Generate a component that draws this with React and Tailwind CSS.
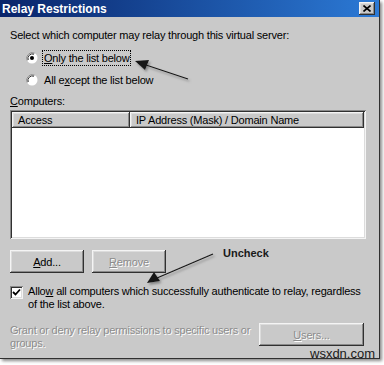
import React from 'react';

const raised = 'shadow-[inset_-1px_-1px_#303030,inset_1px_1px_#f4f4f4,inset_-2px_-2px_#8a8a8a,inset_2px_2px_#dcdcdc]';
const sunken = 'shadow-[inset_1px_1px_#8a8a8a,inset_-1px_-1px_#f4f4f4,inset_2px_2px_#303030,inset_-2px_-2px_#dcdcdc]';
const etched = 'text-[#8c8c8c] [text-shadow:1px_1px_0_#ffffff]';

const Radio = ({ checked }) => (
  <svg width="12" height="12" viewBox="0 0 12 12" className="shrink-0">
    <circle cx="6" cy="6" r="5.5" fill="#ffffff" />
    <path d="M1.2 8.5 A5.5 5.5 0 0 1 8.5 1.2" stroke="#808080" strokeWidth="1" fill="none" />
    <path d="M2.2 8 A4.5 4.5 0 0 1 8 2.2" stroke="#303030" strokeWidth="1" fill="none" />
    {checked && <circle cx="6" cy="6" r="2" fill="#000000" />}
  </svg>
);

const Checkbox = () => (
  <div className={`w-[13px] h-[13px] bg-white shrink-0 ${sunken} flex items-center justify-center`}>
    <svg width="9" height="9" viewBox="0 0 9 9">
      <path d="M1 4 L3.5 6.5 L8 1.5" stroke="#000" strokeWidth="1.8" fill="none" />
    </svg>
  </div>
);

const Button = ({ children, disabled, className = '' }) => (
  <div className={`h-[23px] bg-[#c9c9c9] ${raised} flex items-center justify-center ${disabled ? etched : 'text-black'} ${className}`}>
    {children}
  </div>
);

export default function App() {
  return (
    <div className="relative w-[384px] h-[365px] bg-white overflow-hidden text-[11px] leading-[14px] tracking-[-0.2px] text-black" style={{ fontFamily: '"Liberation Sans", Arial, sans-serif' }}>
      <div className="w-[380px] h-[359px] bg-[#c9c9c9] border-r border-b border-[#303030] shadow-[2px_2px_3px_#8a8a8a] flex flex-col">
        {/* title bar */}
        <div className="h-[17px] flex items-center justify-between pl-[2px] pr-[4px] bg-gradient-to-r from-[#0a246a] via-[#1a4fa0] to-[#2c7ad6]">
          <span className="text-white font-bold text-[12px] tracking-[0px]">Relay Restrictions</span>
          <div className={`w-[16px] h-[13px] bg-[#c9c9c9] ${raised} flex items-center justify-center`}>
            <svg width="8" height="7" viewBox="0 0 8 7">
              <path d="M0.5 0.5 L7.5 6.5 M7.5 0.5 L0.5 6.5" stroke="#000" strokeWidth="1.6" />
            </svg>
          </div>
        </div>

        <div className="flex flex-col pl-[10px] pr-[13px]">
          <div className="mt-[11px] whitespace-nowrap">Select which computer may relay through this virtual server:</div>

          <div className="mt-[9px] ml-[16px] flex items-center gap-[5px]">
            <Radio checked />
            <span className="px-[1px] outline outline-1 outline-dotted outline-black">
              <u>O</u>nly the list below
            </span>
          </div>
          <div className="mt-[8px] ml-[16px] flex items-center gap-[6px]">
            <Radio />
            <span>All e<u>x</u>cept the list below</span>
          </div>

          <div className="mt-[7px]"><u>C</u>omputers:</div>

          {/* list */}
          <div className={`mt-[2px] h-[129px] bg-white p-[2px] ${sunken}`}>
            <div className="flex h-[16px] bg-[#c9c9c9]">
              <div className={`w-[118px] ${raised} pl-[6px] flex items-center`}>Access</div>
              <div className={`flex-1 ${raised} pl-[6px] flex items-center`}>IP Address (Mask) / Domain Name</div>
            </div>
          </div>

          <div className="mt-[11px] flex gap-[8px]">
            <Button className="w-[74px]"><u>A</u>dd...</Button>
            <Button disabled className="w-[74px]"><u>R</u>emove</Button>
          </div>

          <div className="mt-[12px] flex gap-[5px] leading-[13px]">
            <div className="pt-[1px]"><Checkbox /></div>
            <div className="whitespace-nowrap">
              Allo<u>w</u> all computers which successfully authenticate to relay, regardless
              <br />of the list above.
            </div>
          </div>

          <div className="mt-[12px] flex justify-between items-start">
            <div className={`leading-[13px] pt-[1px] whitespace-nowrap ${etched}`}>
              Grant or deny relay permissions to specific users or
              <br />groups.
            </div>
            <Button disabled className="w-[105px] h-[22px] mr-[2px]"><u>U</u>sers...</Button>
          </div>
        </div>
      </div>

      {/* annotation */}
      <div className="absolute left-[223px] top-[246px] font-bold text-[11px] tracking-[0px] text-[#1a1a1a]">
        Uncheck
      </div>
      <svg className="absolute left-0 top-0 pointer-events-none" width="384" height="365" viewBox="0 0 384 365">
        <defs>
          <filter id="sh" x="-20%" y="-20%" width="140%" height="140%">
            <feDropShadow dx="1.5" dy="2" stdDeviation="1.2" floodColor="#6a6a6a" floodOpacity="0.7" />
          </filter>
        </defs>
        <g filter="url(#sh)">
          <line x1="188" y1="79" x2="146" y2="65" stroke="#151515" strokeWidth="1.3" />
          <path d="M135 61 L149 60 L145 70 Z" fill="#151515" />
          <line x1="213" y1="254" x2="157" y2="278" stroke="#151515" strokeWidth="1.3" />
          <path d="M147 283 L154 272 L160 281 Z" fill="#151515" />
        </g>
      </svg>

      <div className="absolute left-[310px] top-[346px] text-[13px] leading-[15px] tracking-[0px] text-[#1a1a1a]">
        wsxdn.com
      </div>
    </div>
  );
}
